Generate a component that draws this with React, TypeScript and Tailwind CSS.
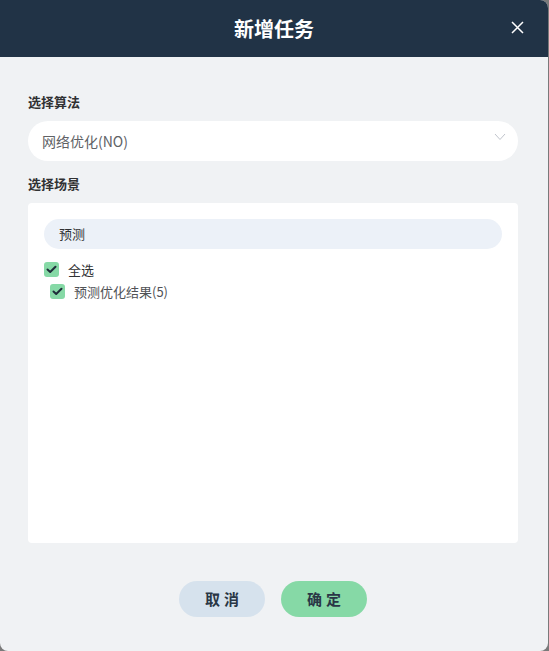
import React from "react";

const font = { fontFamily: '"Noto Sans CJK SC", "Noto Sans", sans-serif' };

function Check() {
  return (
    <svg width="11" height="9" viewBox="0 0 11 9" fill="none">
      <path d="M1.5 4.5 L4.2 7 L9.5 1.8" stroke="#1f2d3a" strokeWidth="2" strokeLinecap="round" strokeLinejoin="round" />
    </svg>
  );
}

function Box() {
  return (
    <span className="w-[15px] h-[15px] rounded-[3px] bg-[#86d9a6] flex items-center justify-center shrink-0">
      <Check />
    </span>
  );
}

export default function App() {
  return (
    <div className="w-[549px] h-[651px] bg-[#7a7a7a] overflow-hidden" style={font}>
      <div className="w-[548px] h-[651px] bg-[#f0f2f4] rounded-tr-[8px] rounded-b-[8px] overflow-hidden flex flex-col">
        <div className="h-[57px] bg-[#213346] flex items-center justify-center relative shrink-0">
          <span className="text-white text-[20px] font-bold leading-none">新增任务</span>
          <svg className="absolute left-[511px] top-[21px]" width="13" height="13" viewBox="0 0 13 13">
            <path d="M1 1 L12 12 M12 1 L1 12" stroke="#ffffff" strokeWidth="1.5" />
          </svg>
        </div>
        <div className="flex flex-col px-[28px] pt-[35px] w-[546px]">
          <div className="text-[13px] font-bold text-[#303133] leading-[20px]">选择算法</div>
          <div className="mt-[9px] h-[40px] bg-white rounded-full flex items-center justify-between pl-[14px] pr-[12px]">
            <span className="text-[14px] text-[#606266]">网络优化(NO)</span>
            <svg width="12" height="8" viewBox="0 0 12 8" className="mb-[8px]">
              <path d="M1 1 L6 6.5 L11 1" stroke="#c0c4cc" strokeWidth="1" fill="none" />
            </svg>
          </div>
          <div className="mt-[13px] text-[13px] font-bold text-[#303133] leading-[20px]">选择场景</div>
          <div className="mt-[9px] h-[340px] bg-white rounded-[4px] px-[16px] pt-[16px]">
            <div className="h-[30px] bg-[#ecf1f8] rounded-full flex items-center pl-[15px] text-[13px] text-[#303133]">预测</div>
            <div className="mt-[13px] flex items-center gap-[9px] h-[15px]">
              <Box />
              <span className="text-[13px] text-[#303133]">全选</span>
            </div>
            <div className="mt-[7px] ml-[6px] flex items-center gap-[9px] h-[15px]">
              <Box />
              <span className="text-[13px] text-[#505256]">预测优化结果(5)</span>
            </div>
          </div>
          <div className="mt-[38px] flex justify-center gap-[16px]">
            <button className="w-[86px] h-[36px] rounded-full bg-[#d6e2ed] text-[15px] font-bold text-[#2a3746] tracking-[4px] pl-[4px]">取消</button>
            <button className="w-[86px] h-[36px] rounded-full bg-[#86d9a6] text-[15px] font-bold text-[#2a3746] tracking-[4px] pl-[4px]">确定</button>
          </div>
        </div>
      </div>
    </div>
  );
}
